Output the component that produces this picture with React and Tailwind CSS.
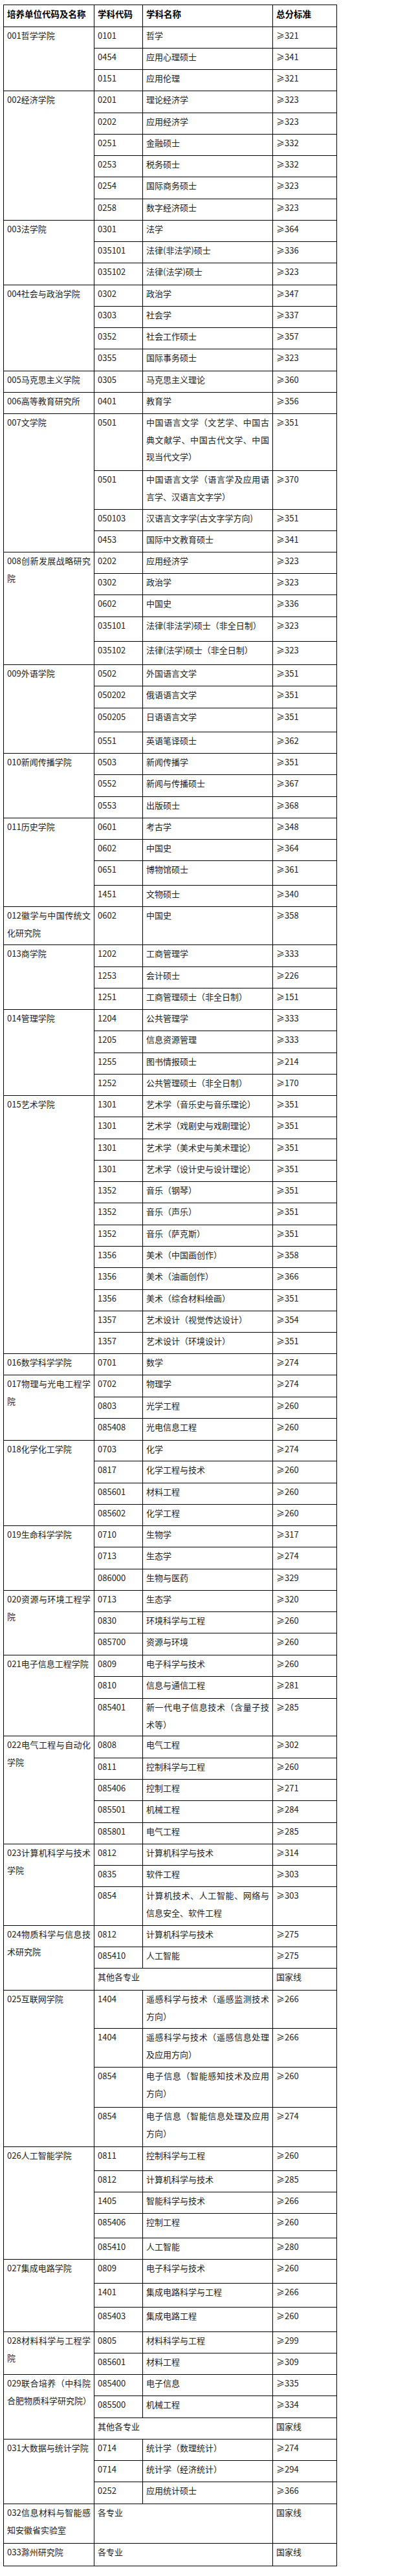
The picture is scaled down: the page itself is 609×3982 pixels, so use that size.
const groups = [
  { unit: "001哲学学院", rows: [["0101", "哲学", "≥321"], ["0454", "应用心理硕士", "≥341"], ["0151", "应用伦理", "≥321"]] },
  {
    unit: "002经济学院",
    rows: [
      ["0201", "理论经济学", "≥323", 34],
      ["0202", "应用经济学", "≥323"],
      ["0251", "金融硕士", "≥332"],
      ["0253", "税务硕士", "≥332"],
      ["0254", "国际商务硕士", "≥323", 34],
      ["0258", "数字经济硕士", "≥323"],
    ],
  },
  { unit: "003法学院", rows: [["0301", "法学", "≥364"], ["035101", "法律(非法学)硕士", "≥336"], ["035102", "法律(法学)硕士", "≥323", 34]] },
  {
    unit: "004社会与政治学院",
    rows: [["0302", "政治学", "≥347"], ["0303", "社会学", "≥337"], ["0352", "社会工作硕士", "≥357"], ["0355", "国际事务硕士", "≥323", 34]],
  },
  { unit: "005马克思主义学院", rows: [["0305", "马克思主义理论", "≥360"]] },
  { unit: "006高等教育研究所", rows: [["0401", "教育学", "≥356"]] },
  {
    unit: "007文学院",
    rows: [
      ["0501", "中国语言文学（文艺学、中国古|典文献学、中国古代文学、中国|现当代文学）", "≥351", 88],
      ["0501", "中国语言文学（语言学及应用语|言学、汉语言文字学）", "≥370", 60],
      ["050103", "汉语言文字学(古文字学方向)", "≥351"],
      ["0453", "国际中文教育硕士", "≥341"],
    ],
  },
  {
    unit: "008创新发展战略研究|院",
    rows: [
      ["0202", "应用经济学", "≥323"],
      ["0302", "政治学", "≥323"],
      ["0602", "中国史", "≥336", 34],
      ["035101", "法律(非法学)硕士（非全日制）", "≥323", 38],
      ["035102", "法律(法学)硕士（非全日制）", "≥323", 36],
    ],
  },
  {
    unit: "009外语学院",
    rows: [["0502", "外国语言文学", "≥351"], ["050202", "俄语语言文学", "≥351", 34], ["050205", "日语语言文学", "≥351", 37], ["0551", "英语笔译硕士", "≥362"]],
  },
  { unit: "010新闻传播学院", rows: [["0503", "新闻传播学", "≥351"], ["0552", "新闻与传播硕士", "≥367", 34], ["0553", "出版硕士", "≥368"]] },
  {
    unit: "011历史学院",
    rows: [["0601", "考古学", "≥348"], ["0602", "中国史", "≥364"], ["0651", "博物馆硕士", "≥361", 38], ["1451", "文物硕士", "≥340"]],
  },
  { unit: "012徽学与中国传统文|化研究院", rows: [["0602", "中国史", "≥358", 59]] },
  { unit: "013商学院", rows: [["1202", "工商管理学", "≥333", 34], ["1253", "会计硕士", "≥226"], ["1251", "工商管理硕士（非全日制）", "≥151"]] },
  {
    unit: "014管理学院",
    rows: [["1204", "公共管理学", "≥333"], ["1205", "信息资源管理", "≥333", 34], ["1255", "图书情报硕士", "≥214"], ["1252", "公共管理硕士（非全日制）", "≥170"]],
  },
  {
    unit: "015艺术学院",
    rows: [
      ["1301", "艺术学（音乐史与音乐理论）", "≥351"],
      ["1301", "艺术学（戏剧史与戏剧理论）", "≥351", 34],
      ["1301", "艺术学（美术史与美术理论）", "≥351"],
      ["1301", "艺术学（设计史与设计理论）", "≥351"],
      ["1352", "音乐（钢琴）", "≥351"],
      ["1352", "音乐（声乐）", "≥351", 34],
      ["1352", "音乐（萨克斯）", "≥351"],
      ["1356", "美术（中国画创作）", "≥358"],
      ["1356", "美术（油画创作）", "≥366", 34],
      ["1356", "美术（综合材料绘画）", "≥351"],
      ["1357", "艺术设计（视觉传达设计）", "≥354"],
      ["1357", "艺术设计（环境设计）", "≥351"],
    ],
  },
  { unit: "016数学科学学院", rows: [["0701", "数学", "≥274"]] },
  { unit: "017物理与光电工程学|院", rows: [["0702", "物理学", "≥274", 34], ["0803", "光学工程", "≥260"], ["085408", "光电信息工程", "≥260", 34]] },
  {
    unit: "018化学化工学院",
    rows: [["0703", "化学", "≥274", 32], ["0817", "化学工程与技术", "≥260", 34], ["085601", "材料工程", "≥260"], ["085602", "化学工程", "≥260"]],
  },
  { unit: "019生命科学学院", rows: [["0710", "生物学", "≥317"], ["0713", "生态学", "≥274", 34], ["086000", "生物与医药", "≥329"]] },
  { unit: "020资源与环境工程学|院", rows: [["0713", "生态学", "≥320"], ["0830", "环境科学与工程", "≥260"], ["085700", "资源与环境", "≥260", 34]] },
  {
    unit: "021电子信息工程学院",
    rows: [["0809", "电子科学与技术", "≥260"], ["0810", "信息与通信工程", "≥281", 34], ["085401", "新一代电子信息技术（含量子技|术等）", "≥285", 58]],
  },
  {
    unit: "022电气工程与自动化|学院",
    rows: [
      ["0808", "电气工程", "≥302", 34],
      ["0811", "控制科学与工程", "≥260"],
      ["085406", "控制工程", "≥271"],
      ["085501", "机械工程", "≥284", 34],
      ["085801", "电气工程", "≥285"],
    ],
  },
  {
    unit: "023计算机科学与技术|学院",
    rows: [["0812", "计算机科学与技术", "≥314"], ["0835", "软件工程", "≥303"], ["0854", "计算机技术、人工智能、网络与|信息安全、软件工程", "≥303", 60]],
  },
  { unit: "024物质科学与信息技|术研究院", rows: [["0812", "计算机科学与技术", "≥275"], ["085410", "人工智能", "≥275"], [null, "其他各专业", "国家线", 34]] },
  {
    unit: "025互联网学院",
    rows: [
      ["1404", "遥感科学与技术（遥感监测技术|方向）", "≥266", 59],
      ["1404", "遥感科学与技术（遥感信息处理|及应用方向）", "≥266", 60],
      ["0854", "电子信息（智能感知技术及应用|方向）", "≥260", 62],
      ["0854", "电子信息（智能信息处理及应用|方向）", "≥274", 61],
    ],
  },
  {
    unit: "026人工智能学院",
    rows: [
      ["0811", "控制科学与工程", "≥260", 37],
      ["0812", "计算机科学与技术", "≥285"],
      ["1405", "智能科学与技术", "≥266"],
      ["085406", "控制工程", "≥260", 38],
      ["085410", "人工智能", "≥280"],
    ],
  },
  { unit: "027集成电路学院", rows: [["0809", "电子科学与技术", "≥260", 37], ["1401", "集成电路科学与工程", "≥266", 37], ["085403", "集成电路工程", "≥260", 38]] },
  { unit: "028材料科学与工程学|院", rows: [["0805", "材料科学与工程", "≥299"], ["085601", "材料工程", "≥309"]] },
  { unit: "029联合培养（中科院|合肥物质科学研究院）", rows: [["085400", "电子信息", "≥335"], ["085500", "机械工程", "≥334", 34], [null, "其他各专业", "国家线"]] },
  { unit: "031大数据与统计学院", rows: [["0714", "统计学（数理统计）", "≥274"], ["0714", "统计学（经济统计）", "≥294"], ["0252", "应用统计硕士", "≥366", 34]] },
  { unit: "032信息材料与智能感|知安徽省实验室", rows: [[null, "各专业", "国家线", 61]] },
  { unit: "033滁州研究院", rows: [[null, "各专业", "国家线", 35]] },
];

const cell = "border border-black align-top pl-[5px] pr-[5px] pt-0 text-left leading-[26.7px]";

// "|" marks where the source wraps; every line but the last is justified to the cell width
function Lines({ text }) {
  const parts = text.split("|");
  if (parts.length === 1) return <span className="whitespace-nowrap">{text}</span>;
  return parts.map((p, i) => (
    <div
      key={i}
      className={i < parts.length - 1 ? "whitespace-nowrap text-justify [text-align-last:justify]" : "whitespace-nowrap"}
    >
      {p}
    </div>
  ));
}

export default function App() {
  return (
    <div className="min-h-screen bg-white pt-[7px] pb-[15px] font-['Noto_Sans_CJK_SC','Liberation_Sans',sans-serif] text-[13px] text-[#222]">
      <table className="ml-[5px] w-[515px] table-fixed border-collapse">
        <colgroup>
          <col className="w-[140px]" />
          <col className="w-[75px]" />
          <col className="w-[201px]" />
          <col className="w-[99px]" />
        </colgroup>
        <thead>
          <tr className="h-[34px]">
            {["培养单位代码及名称", "学科代码", "学科名称", "总分标准"].map((t) => (
              <th key={t} className={`${cell} text-[13.5px] font-bold text-black`}>
                {t}
              </th>
            ))}
          </tr>
        </thead>
        <tbody>
          {groups.map((g) =>
            g.rows.map((r, i) => (
              <tr key={g.unit + i} style={{ height: r[3] || 33 }}>
                {i === 0 && (
                  <td rowSpan={g.rows.length} className={cell}>
                    <Lines text={g.unit} />
                  </td>
                )}
                {r[0] === null ? (
                  <td colSpan={2} className={cell}>
                    {r[1]}
                  </td>
                ) : (
                  <>
                    <td className={cell}>{r[0]}</td>
                    <td className={cell}>
                      <Lines text={r[1]} />
                    </td>
                  </>
                )}
                <td className={cell}>{r[2]}</td>
              </tr>
            ))
          )}
        </tbody>
      </table>
    </div>
  );
}
